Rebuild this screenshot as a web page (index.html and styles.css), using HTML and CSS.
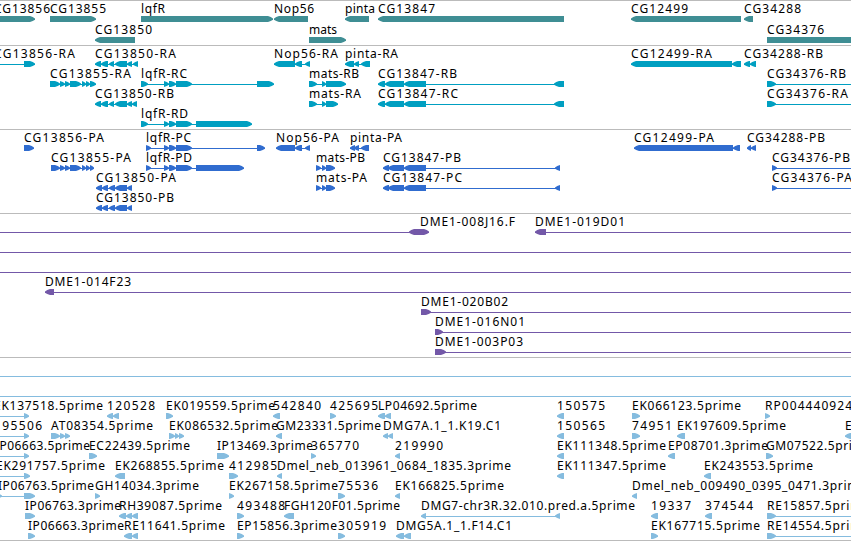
FILE: index.html
```html
<!DOCTYPE html>
<html lang="en">
<head>
  <meta charset="UTF-8">
  <title>Genome browser</title>
  <link rel="stylesheet" href="styles.css">
</head>
<body>
  <div class="browser">
    <svg class="track genes" id="genes"></svg>
    <svg class="track transcripts" id="transcripts"></svg>
    <svg class="track proteins" id="proteins"></svg>
    <svg class="track bacs" id="bacs"></svg>
    <svg class="track ests" id="ests"></svg>
  </div>
  <script src="tracks.js"></script>
</body>
</html>
```

FILE: styles.css
```css
body {
  margin: 0;
  background: #fff;
  overflow: hidden;
}

.browser {
  display: flex;
  flex-direction: column;
  width: 851px;
  height: 540px;
  border-bottom: 1px solid #bbb;
}

.track {
  display: block;
  flex: none;
  box-sizing: border-box;
  width: 851px;
  border-top: 1px solid #bbb;
  overflow: hidden;
}

.track text {
  font-family: "Noto Sans", "Open Sans", sans-serif;
  font-size: 12px;
  fill: #000;
}

.intron {
  shape-rendering: crispEdges;
}

.genes {
  height: 45px;
  fill: #3f8e94;
}

.transcripts {
  height: 84px;
  fill: #009fc1;
}

.proteins {
  height: 84px;
  fill: #306ccf;
}

.bacs {
  height: 144px;
  fill: #7358a8;
}

.ests {
  height: 183px;
  fill: #85bcdf;
}
```

FILE: tracks.js
```js
// feature: [row, label, label start, label end, strand, blocks, line start, line end]
var LQFR = '164-169 169-176 176-192';
var tracks = {
  genes: [
    [0, 'CG13856', -6, 50, '+', '-20-35'],
    [0, 'CG13855', 50, 106, '+', '50-96'],
    [1, 'CG13850', 95, 152, '-', '95-135'],
    [0, 'lqfR', 141, 165, '+', '141-273'],
    [0, 'Nop56', 274, 314, '-', '274-308'],
    [1, 'mats', 309, 337, '+', '309-346'],
    [0, 'pinta', 345, 375, '-', '345-369'],
    [0, 'CG13847', 378, 435, '-', '378-564'],
    [0, 'CG12499', 631, 688, '-', '631-741'],
    [0, 'CG34288', 744, 801, '-', '744-753'],
    [1, 'CG34376', 767, 824, '+', '767-870']
  ],
  transcripts: [
    [0, 'CG13856-RA', -6, 75, '+', '24-35', -10, 35],
    [0, 'CG13850-RA', 95, 176, '-', '95-101 101-108 109-114 115-127 127-132 133-138'],
    [1, 'CG13855-RA', 50, 131, '+', '50-60 60-65 65-70 70-81 82-86 86-90 90-96'],
    [2, 'CG13850-RB', 95, 174, '-', '95-101 101-108 109-114 115-127 127-132 132-137'],
    [1, 'lqfR-RC', 141, 187, '+', '141-148 ' + LQFR + ' 257-274'],
    [3, 'lqfR-RD', 141, 188, '+', '141-148 ' + LQFR + ' 196-252'],
    [0, 'Nop56-RA', 274, 338, '-', '274-295 295-302 305-310'],
    [0, 'pinta-RA', 345, 398, '-', '345-354 354-359 361-370'],
    [1, 'mats-RB', 309, 359, '+', '309-317 322-326 326-346'],
    [2, 'mats-RA', 309, 361, '+', '309-317 322-326 326-338'],
    [1, 'CG13847-RB', 378, 457, '-', '378-385 385-404 404-426 554-564'],
    [2, 'CG13847-RC', 378, 458, '-', '378-385 385-404 404-426 554-564'],
    [0, 'CG12499-RA', 631, 712, '-', '631-732 732-741'],
    [0, 'CG34288-RB', 744, 823, '-', '744-750 750-756'],
    [1, 'CG34376-RB', 767, 846, '+', '767-776', 767, 860],
    [2, 'CG34376-RA', 767, 848, '+', '767-776', 767, 860]
  ],
  proteins: [
    [0, 'CG13856-PA', 24, 104, '+', '24-34'],
    [1, 'CG13855-PA', 51, 131, '+', '51-60 60-65 65-70 70-81 82-86 86-90 90-94'],
    [2, 'CG13850-PA', 96, 176, '-', '96-102 102-108 109-115 115-127 127-132'],
    [3, 'CG13850-PB', 96, 174, '-', '96-102 102-108 109-115 115-127 127-132'],
    [0, 'lqfR-PC', 146, 191, '+', '146-151 ' + LQFR + ' 257-265'],
    [1, 'lqfR-PD', 146, 192, '+', '146-151 ' + LQFR + ' 196-244'],
    [0, 'Nop56-PA', 276, 339, '-', '276-295 295-302 305-310'],
    [0, 'pinta-PA', 350, 402, '-', '350-355 354-359 361-369'],
    [1, 'mats-PB', 316, 365, '+', '316-321 322-326 326-335'],
    [2, 'mats-PA', 316, 367, '+', '316-321 322-326 326-335'],
    [1, 'CG13847-PB', 383, 461, '-', '383-389 388-404 404-426 555-560'],
    [2, 'CG13847-PC', 383, 462, '-', '383-389 388-404 404-426 555-560'],
    [0, 'CG12499-PA', 634, 714, '-', '634-733 733-740'],
    [0, 'CG34288-PB', 747, 825, '-', '747-751 751-756'],
    [1, 'CG34376-PB', 772, 850, '+', '772-777', 772, 860],
    [2, 'CG34376-PA', 772, 852, '+', '772-777', 772, 860]
  ],
  bacs: [
    [0, '', 0, 0, '-', '409-419', -10, 419],
    [0, 'DME1-008J16.F', 420, 515, '+', '419-429'],
    [0, 'DME1-019D01', 535, 625, '-', '535-546', 535, 860],
    [1, '', 0, 0, '+', '', -10, 860],
    [2, '', 0, 0, '+', '', -10, 860],
    [3, 'DME1-014F23', 45, 131, '-', '45-54', 45, 860],
    [4, 'DME1-020B02', 421, 508, '+', '421-431', 421, 860],
    [5, 'DME1-016N01', 435, 525, '+', '435-443', 435, 860],
    [6, 'DME1-003P03', 435, 523, '+', '435-446', 435, 860]
  ],
  ests: [
    [0, '', 0, 0, '+', '', -10, 860],
    [1, '', 0, 0, '+', '', -10, 860],

    [2, 'EK137518.5prime', -6, 103, '+', '24-29', -10, 29],
    [2, '120528', 107, 155, '-', '107-113 113-119'],
    [2, 'EK019559.5prime', 166, 275, '+', '166-173'],
    [2, '542840', 273, 321, '-', '273-280'],
    [2, '425695', 330, 378, '+', '330-336'],
    [2, 'LP04692.5prime', 378, 477, '-', '378-385 385-391'],
    [2, '150575', 557, 605, '-', '557-564'],
    [2, 'EK066123.5prime', 632, 741, '+', '632-640'],
    [2, 'RP004440924', 765, 852, '+', '765-770'],

    [3, '195506', -6, 42, '+', '24-29', -10, 29],
    [3, 'AT08354.5prime', 51, 153, '+', '51-60 60-65 65-70'],
    [3, 'EK086532.5prime', 169, 278, '+', '169-175 175-179 179-184'],
    [3, 'GM23331.5prime', 276, 381, '-', '276-282'],
    [3, 'DMG7A.1_1.K19.C1', 383, 501, '-', '383-388 388-393'],
    [3, '150565', 557, 605, '-', '557-564'],
    [3, '74951', 632, 672, '+', '632-640'],
    [3, 'EK197609.5prime', 677, 786, '-', '677-685'],
    [3, 'EK', 845, 861, '-', '845-855'],

    [4, 'IP06663.5prime', -5, 90, '+', '24-29', -10, 29],
    [4, 'EC22439.5prime', 89, 190, '+', '89-97'],
    [4, 'IP13469.3prime', 217, 313, '+', '217-229'],
    [4, '365770', 311, 359, '+', '311-316'],
    [4, '219990', 395, 443, '-', '395-400'],
    [4, 'EK111348.5prime', 557, 666, '-', '557-564'],
    [4, 'EP08701.3prime', 668, 768, '-', '668-675'],
    [4, 'GM07522.5prime', 766, 871, '+', '766-773'],

    [5, 'EK291757.5prime', -4, 105, '+', '24-30', -10, 30],
    [5, 'EK268855.5prime', 115, 224, '-', '115-125'],
    [5, '412985', 229, 277, '+', '229-238'],
    [5, 'Dmel_neb_013961_0684_1835.3prime', 277, 511, '-', '277-282'],
    [5, 'EK111347.5prime', 557, 666, '-', '557-564'],
    [5, 'EK243553.5prime', 704, 813, '-', '704-711'],

    [6, 'IP06763.5prime', -2, 94, '+', '-4-2 24-35'],
    [6, 'GH14034.3prime', 95, 199, '+', '95-100'],
    [6, 'EK267158.5prime', 229, 338, '+', '229-234'],
    [6, '75536', 338, 378, '+', '338-345'],
    [6, 'EK166825.5prime', 395, 504, '-', '395-400'],
    [6, 'Dmel_neb_009490_0395_0471.3prime', 632, 866, '-', '632-637'],

    [7, 'IP06763.3prime', 25, 121, '+', '25-35'],
    [7, 'RH39087.5prime', 119, 222, '-', '119-126 126-132 132-138'],
    [7, '493488', 237, 285, '+', '237-244'],
    [7, 'FGH120F01.5prime', 284, 400, '-', '284-294'],
    [7, 'DMG7-chr3R.32.010.pred.a.5prime', 421, 635, '-', '421-426 555-560'],
    [7, '19337', 651, 691, '-', '651-658'],
    [7, '374544', 705, 753, '-', '705-712'],
    [7, 'RE15857.5prime', 767, 869, '+', '767-776', 767, 860],

    [8, 'IP06663.3prime', 28, 124, '+', '28-35'],
    [8, 'RE11641.5prime', 124, 225, '-', '124-132 132-138'],
    [8, 'EP15856.3prime', 237, 337, '+', '237-244'],
    [8, '305919', 338, 386, '+', '338-345'],
    [8, 'DMG5A.1_1.F14.C1', 396, 512, '-', '396-404 404-411'],
    [8, 'EK167715.5prime', 651, 760, '+', '651-658'],
    [8, 'RE14554.5prime', 767, 869, '+', '767-776', 767, 860]
  ]
};

// a box with a rounded-off head on the strand side
function arrow(a, b, y, strand) {
  var head = Math.min(5, b - a);
  var tip = strand === '+' ? b : a;
  var tail = strand === '+' ? a : b;
  var dir = strand === '+' ? -1 : 1;
  var neck = tip + dir * head;
  var mid = tip + dir * head * 0.45;
  var pts = [
    [tail, y], [neck, y], [mid, y + 1], [tip, y + 2.5],
    [tip, y + 3.8], [mid, y + 5], [neck, y + 6], [tail, y + 6]
  ];
  return '<polygon points="' + pts.join(' ') + '"/>';
}

Object.keys(tracks).forEach(function (name) {
  var pitch = name === 'genes' ? 21 : 20;
  var out = '';
  tracks[name].forEach(function (f) {
    var top = f[0] * pitch;
    var blocks = (f[5].match(/-?\d+-\d+/g) || []).map(function (s) {
      return s.match(/^(-?\d+)-(\d+)$/).slice(1).map(Number);
    });
    var from = f[6] !== undefined ? f[6] : blocks[0][0];
    var to = f[7] !== undefined ? f[7] : blocks[blocks.length - 1][1];
    out += '<rect class="intron" x="' + from + '" y="' + (top + 18) + '" width="' + (to - from) + '" height="1"/>';
    blocks.forEach(function (b) {
      out += arrow(b[0], b[1], top + 15, f[4]);
    });
    if (f[1]) {
      out += '<text x="' + f[2] + '" y="' + (top + 12) + '" textLength="' + (f[3] - f[2]) + '">' + f[1] + '</text>';
    }
  });
  document.getElementById(name).innerHTML = out;
});
```
